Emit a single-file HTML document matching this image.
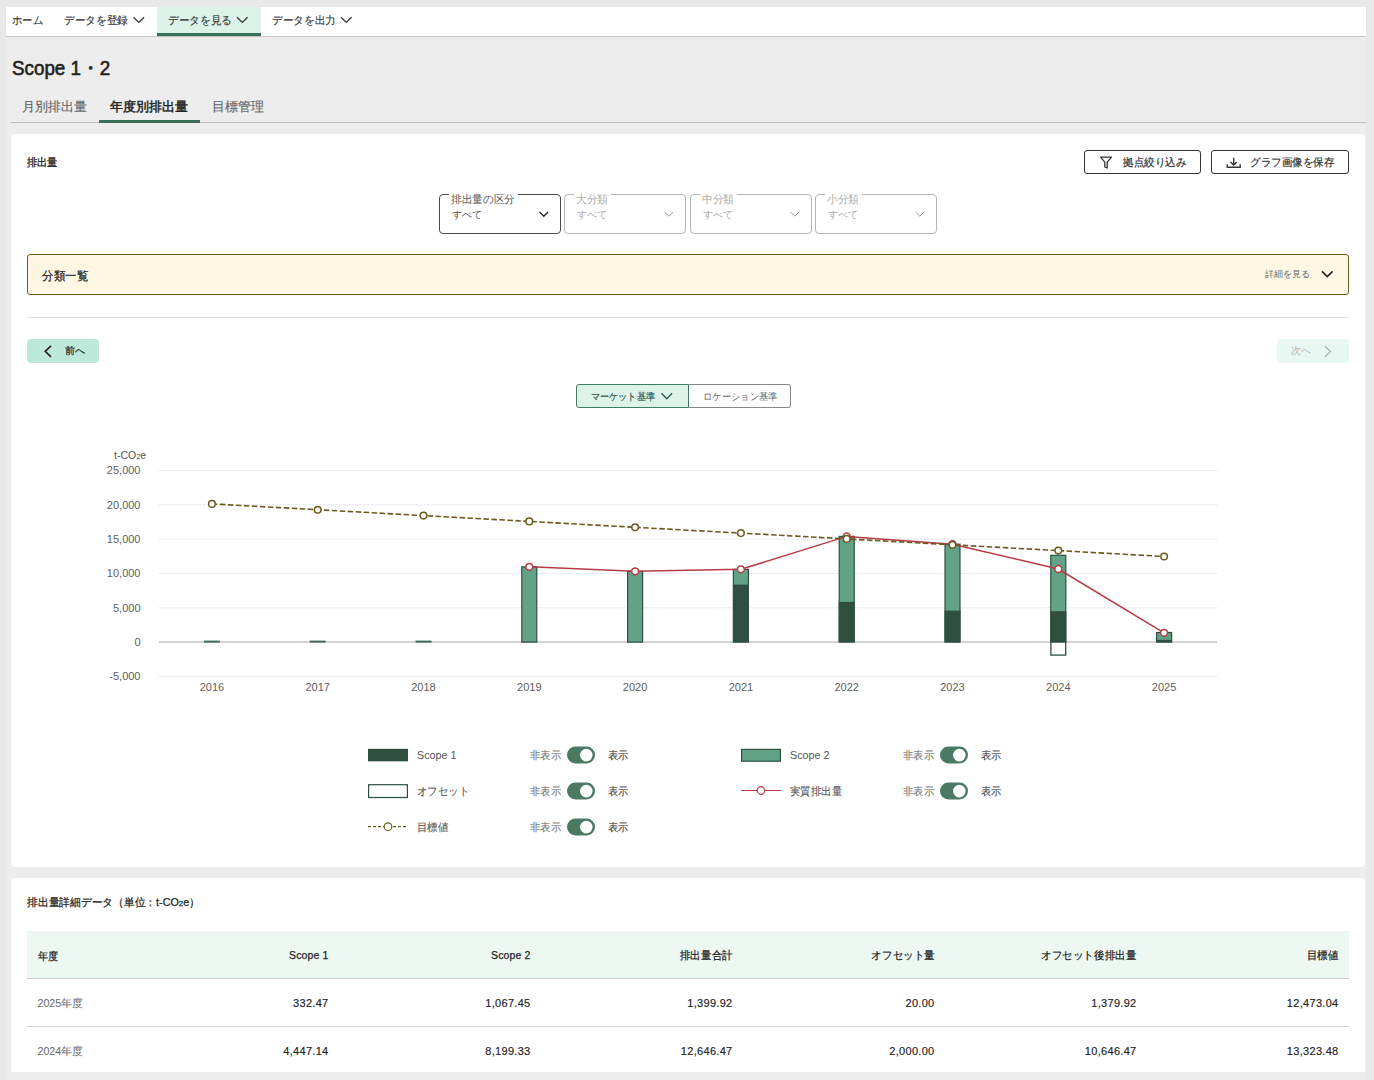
<!DOCTYPE html>
<html lang="ja"><head><meta charset="utf-8">
<style>
*{box-sizing:border-box;margin:0;padding:0}
html,body{width:1374px;height:1080px;overflow:hidden;background:#e8e8e8;font-family:"Liberation Sans",sans-serif;color:#222}
.a{position:absolute;white-space:nowrap}
svg.a{overflow:visible}
</style></head><body>
<div class="a" style="left:6px;top:37px;width:1360px;height:1043px;background:#ededed"></div>
<div class="a" style="left:6px;top:7px;width:1360px;height:30px;background:#fff;border-bottom:1px solid #c4c4c4"></div>
<div class="a" style="left:157px;top:7px;width:104px;height:29px;background:#dcf3ea;border-bottom:3px solid #3b715b"></div>
<div class="a" style="left:11.5px;top:15px;font-size:11px;line-height:11px;color:#333;transform:scaleX(0.94);transform-origin:0 0;-webkit-text-stroke:0.15px #333;">ホーム</div>
<div class="a" style="left:64px;top:15px;font-size:11px;line-height:11px;color:#333;transform:scaleX(0.97);transform-origin:0 0;-webkit-text-stroke:0.15px #333;">データを登録</div>
<div class="a" style="left:168px;top:15px;font-size:11px;line-height:11px;color:#333;transform:scaleX(0.97);transform-origin:0 0;-webkit-text-stroke:0.15px #333;">データを見る</div>
<div class="a" style="left:272px;top:15px;font-size:11px;line-height:11px;color:#333;transform:scaleX(0.97);transform-origin:0 0;-webkit-text-stroke:0.15px #333;">データを出力</div>
<svg class="a" style="left:0;top:0" width="400" height="40">
<path d="M133.5 17.2 L138.8 22.4 L144.10000000000002 17.2" fill="none" stroke="#333" stroke-width="1.3"/>
<path d="M237.0 17.2 L242.3 22.4 L247.60000000000002 17.2" fill="none" stroke="#333" stroke-width="1.3"/>
<path d="M341.0 17.2 L346.3 22.4 L351.6 17.2" fill="none" stroke="#333" stroke-width="1.3"/>
</svg>
<div class="a" style="left:12px;top:58px;font-size:20px;line-height:20px;color:#222;transform:scaleX(0.94);transform-origin:0 0;-webkit-text-stroke:0.6px #222;">Scope 1・2</div>
<div class="a" style="left:11px;top:122px;width:1355px;height:1px;background:#bdbdbd"></div>
<div class="a" style="left:99px;top:120px;width:101px;height:3px;background:#3b715b"></div>
<div class="a" style="left:22px;top:101px;font-size:12.8px;line-height:12.8px;color:#666;-webkit-text-stroke:0.15px #666;">月別排出量</div>
<div class="a" style="left:110px;top:101px;font-size:12.8px;line-height:12.8px;color:#222;-webkit-text-stroke:0.25px currentColor;-webkit-text-stroke:0.45px #222;">年度別排出量</div>
<div class="a" style="left:211.5px;top:101px;font-size:12.8px;line-height:12.8px;color:#666;-webkit-text-stroke:0.15px #666;">目標管理</div>
<div class="a" style="left:11px;top:134px;width:1354px;height:733px;background:#fff;border-radius:4px"></div>
<div class="a" style="left:27px;top:157px;font-size:11px;line-height:11px;color:#222;transform:scaleX(0.93);transform-origin:0 0;-webkit-text-stroke:0.3px #222;">排出量</div>
<div class="a" style="left:1084px;top:150px;width:117px;height:24px;border:1px solid #333;border-radius:3px;background:#fff"></div>
<div class="a" style="left:1211px;top:150px;width:138px;height:24px;border:1px solid #333;border-radius:3px;background:#fff"></div>
<div class="a" style="left:1122.5px;top:157px;font-size:11px;line-height:11px;color:#333;transform:scaleX(0.955);transform-origin:0 0;-webkit-text-stroke:0.2px #333;">拠点絞り込み</div>
<div class="a" style="left:1250px;top:157px;font-size:11px;line-height:11px;color:#333;transform:scaleX(0.96);transform-origin:0 0;-webkit-text-stroke:0.2px #333;">グラフ画像を保存</div>
<svg class="a" style="left:1090px;top:150px" width="160" height="24">
 <path d="M10.5 7.2 H21.5 L17.2 12.2 V18 L14.8 17 V12.2 Z" fill="none" stroke="#333" stroke-width="1.3" stroke-linejoin="round"/>
 <path d="M143.7 7.8 V15 M140.6 11.9 L143.7 15 L146.8 11.9 M137.3 14.2 V17.2 H150.2 V14.2" fill="none" stroke="#333" stroke-width="1.4"/>
</svg>
<div class="a" style="left:439px;top:194px;width:122px;height:40px;border:1px solid #4a4a4a;border-radius:4px"></div>
<div class="a" style="left:448.5px;top:192px;width:69px;height:4px;background:#fff"></div>
<div class="a" style="left:450.5px;top:194px;font-size:11px;line-height:11px;color:#555;transform:scaleX(0.97);transform-origin:0 0;">排出量の区分</div>
<div class="a" style="left:451.5px;top:209.5px;font-size:10.2px;line-height:10.2px;color:#555;">すべて</div>
<svg class="a" style="left:536px;top:206px" width="16" height="16"><path d="M3.5 6 L7.8 10.2 L12.1 6" fill="none" stroke="#222" stroke-width="1.35"/></svg>
<div class="a" style="left:564px;top:194px;width:122px;height:40px;border:1px solid #b5b5b5;border-radius:4px"></div>
<div class="a" style="left:573.5px;top:192px;width:37px;height:4px;background:#fff"></div>
<div class="a" style="left:575.5px;top:194px;font-size:11px;line-height:11px;color:#aaa;transform:scaleX(0.97);transform-origin:0 0;">大分類</div>
<div class="a" style="left:576.5px;top:209.5px;font-size:10.2px;line-height:10.2px;color:#aaa;">すべて</div>
<svg class="a" style="left:661px;top:206px" width="16" height="16"><path d="M3.5 6 L7.8 10.2 L12.1 6" fill="none" stroke="#999" stroke-width="1.0"/></svg>
<div class="a" style="left:690px;top:194px;width:122px;height:40px;border:1px solid #b5b5b5;border-radius:4px"></div>
<div class="a" style="left:699.5px;top:192px;width:37px;height:4px;background:#fff"></div>
<div class="a" style="left:701.5px;top:194px;font-size:11px;line-height:11px;color:#aaa;transform:scaleX(0.97);transform-origin:0 0;">中分類</div>
<div class="a" style="left:702.5px;top:209.5px;font-size:10.2px;line-height:10.2px;color:#aaa;">すべて</div>
<svg class="a" style="left:787px;top:206px" width="16" height="16"><path d="M3.5 6 L7.8 10.2 L12.1 6" fill="none" stroke="#999" stroke-width="1.0"/></svg>
<div class="a" style="left:815px;top:194px;width:122px;height:40px;border:1px solid #b5b5b5;border-radius:4px"></div>
<div class="a" style="left:824.5px;top:192px;width:37px;height:4px;background:#fff"></div>
<div class="a" style="left:826.5px;top:194px;font-size:11px;line-height:11px;color:#aaa;transform:scaleX(0.97);transform-origin:0 0;">小分類</div>
<div class="a" style="left:827.5px;top:209.5px;font-size:10.2px;line-height:10.2px;color:#aaa;">すべて</div>
<svg class="a" style="left:912px;top:206px" width="16" height="16"><path d="M3.5 6 L7.8 10.2 L12.1 6" fill="none" stroke="#999" stroke-width="1.0"/></svg>
<div class="a" style="left:27px;top:254px;width:1322px;height:41px;background:#fdf7e3;border:1px solid #6e5b1d;border-radius:3px"></div>
<div class="a" style="left:41.5px;top:270px;font-size:12px;line-height:12px;color:#222;transform:scaleX(0.96);transform-origin:0 0;-webkit-text-stroke:0.22px #222;">分類一覧</div>
<div class="a" style="left:1265px;top:270px;font-size:9.2px;line-height:9.2px;color:#666;">詳細を見る</div>
<svg class="a" style="left:1318px;top:266px" width="18" height="14"><path d="M4 5.3 L9.3 10.5 L14.6 5.3" fill="none" stroke="#222" stroke-width="1.7"/></svg>
<div class="a" style="left:27px;top:317px;width:1322px;height:1px;background:#e0e0e0"></div>
<div class="a" style="left:27px;top:339px;width:72px;height:24px;background:#bde9da;border-radius:4px"></div>
<svg class="a" style="left:40px;top:343px" width="16" height="16"><path d="M11 2.8 L5.2 8.3 L11 13.8" fill="none" stroke="#222" stroke-width="1.6"/></svg>
<div class="a" style="left:64.5px;top:346px;font-size:10.3px;line-height:10.3px;color:#222;-webkit-text-stroke:0.2px #222;">前へ</div>
<div class="a" style="left:1277px;top:339px;width:72px;height:24px;background:#e8f7f1;border-radius:4px"></div>
<div class="a" style="left:1291px;top:346px;font-size:10.3px;line-height:10.3px;color:#b5b5b5;">次へ</div>
<svg class="a" style="left:1320px;top:343px" width="16" height="16"><path d="M5 3.2 L10.4 8.5 L5 13.8" fill="none" stroke="#b5b5b5" stroke-width="1.4"/></svg>
<div class="a" style="left:576px;top:384px;width:113px;height:24px;background:#ddf3ea;border:1.5px solid #3f7a60;border-radius:3px 0 0 3px"></div>
<div class="a" style="left:689px;top:384px;width:102px;height:24px;background:#fff;border:1px solid #888;border-left:none;border-radius:0 3px 3px 0"></div>
<div class="a" style="left:591px;top:391.5px;font-size:10px;line-height:10px;color:#2f5a47;transform:scaleX(0.91);transform-origin:0 0;-webkit-text-stroke:0.2px #2f5a47;">マーケット基準</div>
<svg class="a" style="left:656px;top:388px" width="20" height="16"><path d="M5.5 5.3 L10.8 10.8 L16.1 5.3" fill="none" stroke="#2f5a47" stroke-width="1.4"/></svg>
<div class="a" style="left:703px;top:391.5px;font-size:10px;line-height:10px;color:#666;transform:scaleX(0.93);transform-origin:0 0;">ロケーション基準</div>
<svg class="a" style="left:0;top:0" width="1374" height="720">
<text x="114" y="459" font-size="10.5" fill="#555">t-CO<tspan font-size="7.5">2</tspan>e</text>
<text x="140.5" y="474.2" font-size="11" fill="#606060" text-anchor="end">25,000</text>
<line x1="159" x2="1217" y1="470.5" y2="470.5" stroke="#e1e5f1" stroke-width="1" stroke-dasharray="3 1"/>
<text x="140.5" y="508.5" font-size="11" fill="#606060" text-anchor="end">20,000</text>
<line x1="159" x2="1217" y1="504.8" y2="504.8" stroke="#e1e5f1" stroke-width="1" stroke-dasharray="3 1"/>
<text x="140.5" y="542.8" font-size="11" fill="#606060" text-anchor="end">15,000</text>
<line x1="159" x2="1217" y1="539.1" y2="539.1" stroke="#e1e5f1" stroke-width="1" stroke-dasharray="3 1"/>
<text x="140.5" y="577.1" font-size="11" fill="#606060" text-anchor="end">10,000</text>
<line x1="159" x2="1217" y1="573.4" y2="573.4" stroke="#e1e5f1" stroke-width="1" stroke-dasharray="3 1"/>
<text x="140.5" y="611.5" font-size="11" fill="#606060" text-anchor="end">5,000</text>
<line x1="159" x2="1217" y1="607.8" y2="607.8" stroke="#e1e5f1" stroke-width="1" stroke-dasharray="3 1"/>
<text x="140.5" y="645.8" font-size="11" fill="#606060" text-anchor="end">0</text>
<text x="140.5" y="680.1" font-size="11" fill="#606060" text-anchor="end">-5,000</text>
<line x1="159" x2="1217" y1="676.4" y2="676.4" stroke="#e1e5f1" stroke-width="1" stroke-dasharray="3 1"/>
<text x="211.9" y="690.8" font-size="11" fill="#606060" text-anchor="middle">2016</text>
<text x="317.7" y="690.8" font-size="11" fill="#606060" text-anchor="middle">2017</text>
<text x="423.5" y="690.8" font-size="11" fill="#606060" text-anchor="middle">2018</text>
<text x="529.3" y="690.8" font-size="11" fill="#606060" text-anchor="middle">2019</text>
<text x="635.1" y="690.8" font-size="11" fill="#606060" text-anchor="middle">2020</text>
<text x="740.9" y="690.8" font-size="11" fill="#606060" text-anchor="middle">2021</text>
<text x="846.7" y="690.8" font-size="11" fill="#606060" text-anchor="middle">2022</text>
<text x="952.5" y="690.8" font-size="11" fill="#606060" text-anchor="middle">2023</text>
<text x="1058.3" y="690.8" font-size="11" fill="#606060" text-anchor="middle">2024</text>
<text x="1164.1" y="690.8" font-size="11" fill="#606060" text-anchor="middle">2025</text>
<line x1="159" x2="1217" y1="642.1" y2="642.1" stroke="#c4c4c4" stroke-width="1.5"/>
<rect x="203.9" y="640.6" width="16" height="2" fill="#3f6b58"/>
<rect x="309.7" y="640.6" width="16" height="2" fill="#3f6b58"/>
<rect x="415.5" y="640.6" width="16" height="2" fill="#3f6b58"/>
<rect x="521.8" y="566.8" width="15" height="75.3" fill="#62a388" stroke="#2e4f40" stroke-width="1.2"/>
<rect x="627.6" y="571.3" width="15" height="70.8" fill="#62a388" stroke="#2e4f40" stroke-width="1.2"/>
<rect x="733.4" y="569.3" width="15" height="72.8" fill="#62a388" stroke="#2e4f40" stroke-width="1.2"/>
<rect x="732.9" y="584.6" width="16" height="57.5" fill="#2e4f40"/>
<rect x="839.2" y="536.4" width="15" height="105.7" fill="#62a388" stroke="#2e4f40" stroke-width="1.2"/>
<rect x="838.7" y="601.9" width="16" height="40.2" fill="#2e4f40"/>
<rect x="945.0" y="544.2" width="15" height="97.9" fill="#62a388" stroke="#2e4f40" stroke-width="1.2"/>
<rect x="944.5" y="610.6" width="16" height="31.5" fill="#2e4f40"/>
<rect x="1050.8" y="555.3" width="15" height="86.8" fill="#62a388" stroke="#2e4f40" stroke-width="1.2"/>
<rect x="1050.3" y="611.2" width="16" height="30.9" fill="#2e4f40"/>
<rect x="1156.6" y="632.5" width="15" height="9.6" fill="#62a388" stroke="#2e4f40" stroke-width="1.2"/>
<rect x="1156.1" y="639.8" width="16" height="2.3" fill="#2e4f40"/>
<rect x="1050.9" y="642.1" width="14.8" height="13" fill="#fff" stroke="#2e4f40" stroke-width="1.3"/>
<polyline points="529.3,566.8 635.1,571.3 740.9,569.3 846.7,536.4 952.5,544.2 1058.3,569.0 1164.1,632.8" fill="none" stroke="#b63b45" stroke-width="1.5"/>
<circle cx="529.3" cy="566.8" r="3.4" fill="#fff" stroke="#b63b45" stroke-width="1.5"/>
<circle cx="635.1" cy="571.3" r="3.4" fill="#fff" stroke="#b63b45" stroke-width="1.5"/>
<circle cx="740.9" cy="569.3" r="3.4" fill="#fff" stroke="#b63b45" stroke-width="1.5"/>
<circle cx="846.7" cy="536.4" r="3.4" fill="#fff" stroke="#b63b45" stroke-width="1.5"/>
<circle cx="952.5" cy="544.2" r="3.4" fill="#fff" stroke="#b63b45" stroke-width="1.5"/>
<circle cx="1058.3" cy="569.0" r="3.4" fill="#fff" stroke="#b63b45" stroke-width="1.5"/>
<circle cx="1164.1" cy="632.8" r="3.4" fill="#fff" stroke="#b63b45" stroke-width="1.5"/>
<polyline points="211.9,503.9 317.7,509.7 423.5,515.6 529.3,521.4 635.1,527.3 740.9,533.1 846.7,538.9 952.5,544.8 1058.3,550.6 1164.1,556.5" fill="none" stroke="#6b5a1d" stroke-width="1.6" stroke-dasharray="5.5 2.5"/>
<circle cx="211.9" cy="503.9" r="3.3" fill="#fff" stroke="#6b5a1d" stroke-width="1.5"/>
<circle cx="317.7" cy="509.7" r="3.3" fill="#fff" stroke="#6b5a1d" stroke-width="1.5"/>
<circle cx="423.5" cy="515.6" r="3.3" fill="#fff" stroke="#6b5a1d" stroke-width="1.5"/>
<circle cx="529.3" cy="521.4" r="3.3" fill="#fff" stroke="#6b5a1d" stroke-width="1.5"/>
<circle cx="635.1" cy="527.3" r="3.3" fill="#fff" stroke="#6b5a1d" stroke-width="1.5"/>
<circle cx="740.9" cy="533.1" r="3.3" fill="#fff" stroke="#6b5a1d" stroke-width="1.5"/>
<circle cx="846.7" cy="538.9" r="3.3" fill="#fff" stroke="#6b5a1d" stroke-width="1.5"/>
<circle cx="952.5" cy="544.8" r="3.3" fill="#fff" stroke="#6b5a1d" stroke-width="1.5"/>
<circle cx="1058.3" cy="550.6" r="3.3" fill="#fff" stroke="#6b5a1d" stroke-width="1.5"/>
<circle cx="1164.1" cy="556.5" r="3.3" fill="#fff" stroke="#6b5a1d" stroke-width="1.5"/>
</svg>
<svg class="a" style="left:0;top:720px" width="1374" height="130">
<rect x="368" y="28.8" width="40" height="12.5" fill="#2e4f40"/>
<rect x="567" y="26.4" width="28" height="17" rx="8.5" fill="#4a7a63"/>
<circle cx="586.3" cy="35.1" r="6.3" fill="#fff"/>
<rect x="741.6" y="29.4" width="38.8" height="11.8" fill="#62a388" stroke="#2e4f40" stroke-width="1.2"/>
<rect x="940" y="26.4" width="28" height="17" rx="8.5" fill="#4a7a63"/>
<circle cx="959.3" cy="35.1" r="6.3" fill="#fff"/>
<rect x="368.6" y="64.7" width="38.8" height="12.8" fill="#fff" stroke="#2e4f40" stroke-width="1.2"/>
<rect x="567" y="62.4" width="28" height="17" rx="8.5" fill="#4a7a63"/>
<circle cx="586.3" cy="71.1" r="6.3" fill="#fff"/>
<line x1="741" x2="781" y1="70.5" y2="70.5" stroke="#b63b45" stroke-width="1.2"/>
<circle cx="761" cy="70.5" r="3.8" fill="#fff" stroke="#b63b45" stroke-width="1.2"/>
<rect x="940" y="62.4" width="28" height="17" rx="8.5" fill="#4a7a63"/>
<circle cx="959.3" cy="71.1" r="6.3" fill="#fff"/>
<line x1="368" x2="408" y1="106.7" y2="106.7" stroke="#6b5a1d" stroke-width="1.2" stroke-dasharray="3 2"/>
<circle cx="388" cy="106.7" r="3.8" fill="#fff" stroke="#6b5a1d" stroke-width="1.2"/>
<rect x="567" y="98.4" width="28" height="17" rx="8.5" fill="#4a7a63"/>
<circle cx="586.3" cy="107.1" r="6.3" fill="#fff"/>
</svg>
<div class="a" style="left:416.5px;top:750px;font-size:11.3px;line-height:11.3px;color:#555;transform:scaleX(0.95);transform-origin:0 0;">Scope 1</div>
<div class="a" style="left:530px;top:749.5px;font-size:11px;line-height:11px;color:#777;transform:scaleX(0.94);transform-origin:0 0;-webkit-text-stroke:0.1px #777;">非表示</div>
<div class="a" style="left:607.5px;top:749.5px;font-size:11px;line-height:11px;color:#444;transform:scaleX(0.93);transform-origin:0 0;-webkit-text-stroke:0.1px #444;">表示</div>
<div class="a" style="left:789.5px;top:750px;font-size:11.3px;line-height:11.3px;color:#555;transform:scaleX(0.95);transform-origin:0 0;">Scope 2</div>
<div class="a" style="left:903px;top:749.5px;font-size:11px;line-height:11px;color:#777;transform:scaleX(0.94);transform-origin:0 0;-webkit-text-stroke:0.1px #777;">非表示</div>
<div class="a" style="left:980.5px;top:749.5px;font-size:11px;line-height:11px;color:#444;transform:scaleX(0.93);transform-origin:0 0;-webkit-text-stroke:0.1px #444;">表示</div>
<div class="a" style="left:416.5px;top:785.5px;font-size:11px;line-height:11px;color:#555;transform:scaleX(0.95);transform-origin:0 0;-webkit-text-stroke:0.1px #555;">オフセット</div>
<div class="a" style="left:530px;top:785.5px;font-size:11px;line-height:11px;color:#777;transform:scaleX(0.94);transform-origin:0 0;-webkit-text-stroke:0.1px #777;">非表示</div>
<div class="a" style="left:607.5px;top:785.5px;font-size:11px;line-height:11px;color:#444;transform:scaleX(0.93);transform-origin:0 0;-webkit-text-stroke:0.1px #444;">表示</div>
<div class="a" style="left:789.5px;top:785.5px;font-size:11px;line-height:11px;color:#555;transform:scaleX(0.95);transform-origin:0 0;-webkit-text-stroke:0.1px #555;">実質排出量</div>
<div class="a" style="left:903px;top:785.5px;font-size:11px;line-height:11px;color:#777;transform:scaleX(0.94);transform-origin:0 0;-webkit-text-stroke:0.1px #777;">非表示</div>
<div class="a" style="left:980.5px;top:785.5px;font-size:11px;line-height:11px;color:#444;transform:scaleX(0.93);transform-origin:0 0;-webkit-text-stroke:0.1px #444;">表示</div>
<div class="a" style="left:416.5px;top:821.5px;font-size:11px;line-height:11px;color:#555;transform:scaleX(0.95);transform-origin:0 0;-webkit-text-stroke:0.1px #555;">目標値</div>
<div class="a" style="left:530px;top:821.5px;font-size:11px;line-height:11px;color:#777;transform:scaleX(0.94);transform-origin:0 0;-webkit-text-stroke:0.1px #777;">非表示</div>
<div class="a" style="left:607.5px;top:821.5px;font-size:11px;line-height:11px;color:#444;transform:scaleX(0.93);transform-origin:0 0;-webkit-text-stroke:0.1px #444;">表示</div>
<div class="a" style="left:11px;top:878px;width:1354px;height:194px;background:#fff;border-radius:4px 4px 0 0"></div>
<div class="a" style="left:27px;top:897px;font-size:11px;line-height:11px;color:#222;transform:scaleX(0.978);transform-origin:0 0;-webkit-text-stroke:0.25px #222;">排出量詳細データ（単位：t-CO<span style="font-size:8px">2</span>e）</div>
<div class="a" style="left:27px;top:931px;width:1322px;height:48px;background:#eef8f3;border-bottom:1px solid #cfd4d2"></div>
<div class="a" style="left:27px;top:1026px;width:1322px;height:1px;background:#d6d6d6"></div>
<div class="a" style="left:37.5px;top:951px;font-size:11px;line-height:11px;color:#222;transform:scaleX(0.93);transform-origin:0 0;-webkit-text-stroke:0.2px #222;">年度</div>
<div class="a" style="left:37.5px;top:998px;font-size:10.6px;line-height:10.6px;color:#666;">2025年度</div>
<div class="a" style="left:37.5px;top:1046px;font-size:10.6px;line-height:10.6px;color:#666;">2024年度</div>
<div class="a" style="right:1045.5px;top:950px;font-size:11px;line-height:11px;color:#222;transform:scaleX(0.95);transform-origin:100% 0;-webkit-text-stroke:0.25px #222;letter-spacing:0.15px;">Scope 1</div>
<div class="a" style="right:1045.5px;top:998px;font-size:11px;line-height:11px;color:#222;-webkit-text-stroke:0.15px #222;letter-spacing:0.3px;">332.47</div>
<div class="a" style="right:1045.5px;top:1046px;font-size:11px;line-height:11px;color:#222;-webkit-text-stroke:0.15px #222;letter-spacing:0.3px;">4,447.14</div>
<div class="a" style="right:843.5px;top:950px;font-size:11px;line-height:11px;color:#222;transform:scaleX(0.95);transform-origin:100% 0;-webkit-text-stroke:0.25px #222;letter-spacing:0.15px;">Scope 2</div>
<div class="a" style="right:843.5px;top:998px;font-size:11px;line-height:11px;color:#222;-webkit-text-stroke:0.15px #222;letter-spacing:0.3px;">1,067.45</div>
<div class="a" style="right:843.5px;top:1046px;font-size:11px;line-height:11px;color:#222;-webkit-text-stroke:0.15px #222;letter-spacing:0.3px;">8,199.33</div>
<div class="a" style="right:641.5px;top:950px;font-size:11px;line-height:11px;color:#222;transform:scaleX(0.95);transform-origin:100% 0;-webkit-text-stroke:0.25px #222;letter-spacing:0.15px;">排出量合計</div>
<div class="a" style="right:641.5px;top:998px;font-size:11px;line-height:11px;color:#222;-webkit-text-stroke:0.15px #222;letter-spacing:0.3px;">1,399.92</div>
<div class="a" style="right:641.5px;top:1046px;font-size:11px;line-height:11px;color:#222;-webkit-text-stroke:0.15px #222;letter-spacing:0.3px;">12,646.47</div>
<div class="a" style="right:439.5px;top:950px;font-size:11px;line-height:11px;color:#222;transform:scaleX(0.95);transform-origin:100% 0;-webkit-text-stroke:0.25px #222;letter-spacing:0.15px;">オフセット量</div>
<div class="a" style="right:439.5px;top:998px;font-size:11px;line-height:11px;color:#222;-webkit-text-stroke:0.15px #222;letter-spacing:0.3px;">20.00</div>
<div class="a" style="right:439.5px;top:1046px;font-size:11px;line-height:11px;color:#222;-webkit-text-stroke:0.15px #222;letter-spacing:0.3px;">2,000.00</div>
<div class="a" style="right:237.5px;top:950px;font-size:11px;line-height:11px;color:#222;transform:scaleX(0.95);transform-origin:100% 0;-webkit-text-stroke:0.25px #222;letter-spacing:0.15px;">オフセット後排出量</div>
<div class="a" style="right:237.5px;top:998px;font-size:11px;line-height:11px;color:#222;-webkit-text-stroke:0.15px #222;letter-spacing:0.3px;">1,379.92</div>
<div class="a" style="right:237.5px;top:1046px;font-size:11px;line-height:11px;color:#222;-webkit-text-stroke:0.15px #222;letter-spacing:0.3px;">10,646.47</div>
<div class="a" style="right:35.5px;top:950px;font-size:11px;line-height:11px;color:#222;transform:scaleX(0.95);transform-origin:100% 0;-webkit-text-stroke:0.25px #222;letter-spacing:0.15px;">目標値</div>
<div class="a" style="right:35.5px;top:998px;font-size:11px;line-height:11px;color:#222;-webkit-text-stroke:0.15px #222;letter-spacing:0.3px;">12,473.04</div>
<div class="a" style="right:35.5px;top:1046px;font-size:11px;line-height:11px;color:#222;-webkit-text-stroke:0.15px #222;letter-spacing:0.3px;">13,323.48</div>
</body></html>
